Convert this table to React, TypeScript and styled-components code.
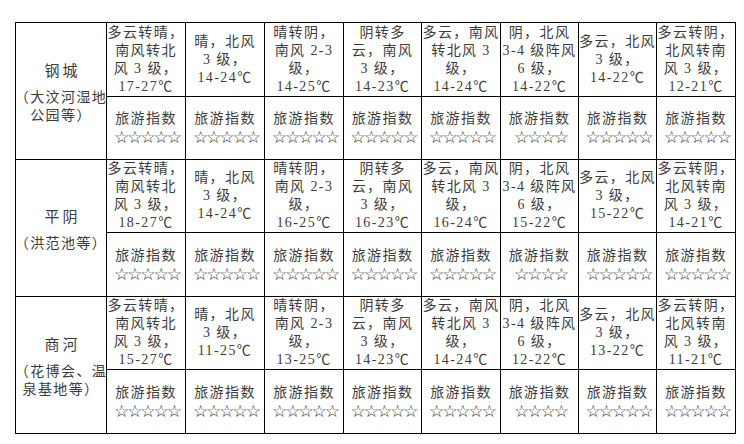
import React from "react";
import styled, { createGlobalStyle } from "styled-components";

const GlobalStyle = createGlobalStyle`
	body {
		margin: 0;
		background: #fff;
	}
`;

const forecasts = [
	["多云转晴，", "南风转北", "风 3 级，"],
	["晴，北风", "3 级，"],
	["晴转阴，", "南风 2-3", "级，"],
	["阴转多", "云，南风", "3 级，"],
	["多云，南风", "转北风 3", "级，"],
	["阴，北风", "3-4 级阵风", "6 级，"],
	["多云，北风", "3 级，"],
	["多云转阴，", "北风转南", "风 3 级，"],
];

const stars = [5, 5, 5, 5, 5, 4, 5, 5];

const places = [
	{
		name: "钢城",
		note: ["（大汶河湿地", "公园等）"],
		temps: ["17-27℃", "14-24℃", "14-25℃", "14-23℃", "14-24℃", "14-22℃", "14-22℃", "12-21℃"],
	},
	{
		name: "平阴",
		note: ["（洪范池等）"],
		temps: ["18-27℃", "14-24℃", "16-25℃", "16-23℃", "16-24℃", "15-22℃", "15-22℃", "14-21℃"],
	},
	{
		name: "商河",
		note: ["（花博会、温", "泉基地等）"],
		temps: ["15-27℃", "11-25℃", "13-25℃", "14-23℃", "14-24℃", "12-22℃", "13-22℃", "11-21℃"],
	},
];

const Page = styled.main`
	padding: 22px 0 0 15px;
	font-family: "Liberation Serif", "Noto Sans CJK SC", serif;
	color: #3c3c3c;
`;

const Grid = styled.div`
	display: inline-grid;
	grid-template-columns: 90px 78px 78px 78px 77px 78px 77px 77px 78px;
	grid-template-rows: 73px 62px 72px 63px 72px 63px;
	gap: 1px;
	padding: 1px;
	background: #000;
`;

const PlaceCell = styled.div`
	grid-row: span 2;
	background: #fff;
	display: flex;
	flex-direction: column;
	align-items: center;
	justify-content: center;
	padding-top: 4px;
`;

const PlaceName = styled.div`
	font-size: 15px;
	line-height: 20px;
	letter-spacing: 3px;
	margin-bottom: 8px;
	padding-left: 3px;
`;

const Cell = styled.div`
	background: #fff;
	display: flex;
	flex-direction: column;
	align-items: center;
	justify-content: center;
`;

const Line = styled.div`
	font-size: 14px;
	line-height: 18px;
	letter-spacing: 1.4px;
	white-space: nowrap;
	text-align: center;
`;

const Stars = styled.div`
	font-family: "DejaVu Sans", sans-serif;
	font-size: 17px;
	line-height: 18px;
	letter-spacing: -2px;
	padding-left: 2px;
	color: #333;
	white-space: nowrap;
`;

const App = () => {
	return (
		<>
			<GlobalStyle />
			<Page>
				<Grid>
					{places.map((place) => (
						<React.Fragment key={place.name}>
							<PlaceCell>
								<PlaceName>{place.name}</PlaceName>
								{place.note.map((line) => (
									<Line key={line}>{line}</Line>
								))}
							</PlaceCell>
							{forecasts.map((lines, i) => (
								<Cell key={"w" + i}>
									{lines.map((line) => (
										<Line key={line}>{line}</Line>
									))}
									<Line>{place.temps[i]}</Line>
								</Cell>
							))}
							{stars.map((count, i) => (
								<Cell key={"s" + i}>
									<Line>旅游指数</Line>
									<Stars>{"☆".repeat(count)}</Stars>
								</Cell>
							))}
						</React.Fragment>
					))}
				</Grid>
			</Page>
		</>
	);
};

export default App;
